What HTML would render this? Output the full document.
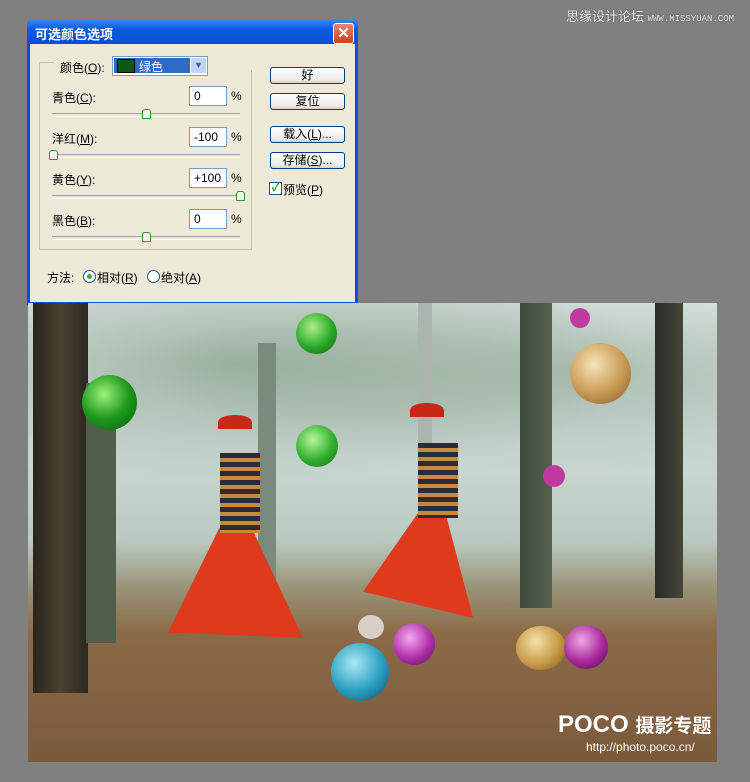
<!DOCTYPE html>
<html><head><meta charset="utf-8"><style>
body{margin:0;width:750px;height:782px;background:#808080;position:relative;overflow:hidden;font-family:"Liberation Sans","Noto Sans CJK SC",sans-serif;font-size:12px;color:#000}
.a{position:absolute}
.inp{position:absolute;left:189px;width:32px;height:18px;background:#fff;border:1px solid #7f9db9;font-size:12px;line-height:18px;padding-left:4px;box-sizing:content-box}
.pct{position:absolute;left:231px}
.sl{position:absolute;left:52px;width:188px;height:2px;border-top:1px solid #a0a0a0;border-bottom:1px solid #fff}
.th{position:absolute;width:7px;height:8px;background:#f4f4f0;border:1px solid #3a8a3a;border-radius:3px 3px 1px 1px}
.btn{position:absolute;left:270px;width:73px;height:15px;border:1px solid #003c74;border-radius:3px;background:linear-gradient(#fff,#ecebe6 80%,#d6d0c5);text-align:center;line-height:15px;font-size:12px}
.ball{position:absolute;border-radius:50%}
.tree{position:absolute}
</style></head><body>
<div class="a" style="left:566px;top:6px;color:#eee;font-size:13px;text-shadow:0 0 1px #333">思缘设计论坛 <span style="font-size:9px;font-family:'Liberation Mono',monospace">WWW.MISSYUAN.COM</span></div>

<div class="a" style="left:27px;top:19px;width:331px;height:286px;background:#0a4fd8;border-radius:6px 6px 0 0"></div>
<div class="a" style="left:27px;top:19px;width:331px;height:25px;background:linear-gradient(#3d8cf5,#0b5ce0 40%,#0650d4);border-radius:6px 6px 0 0"></div>
<div class="a" style="left:35px;top:24px;color:#fff;font-weight:bold;font-size:13px">可选颜色选项</div>
<div class="a" style="left:333px;top:23px;width:19px;height:19px;background:linear-gradient(#e8846a,#c8421e);border:1px solid #fff;border-radius:3px;color:#fff;font-weight:bold;text-align:center;line-height:19px;font-size:15px">✕</div>
<div class="a" style="left:30px;top:44px;width:325px;height:258px;background:#ece9d8"></div>

<div class="a" style="left:39px;top:62px;width:211px;height:186px;border:1px solid #c5c2b2"></div>
<div class="a" style="left:54px;top:56px;width:200px;height:14px;background:#ece9d8"></div>
<div class="a" style="left:60px;top:59px">颜色(<u>O</u>):</div>
<div class="a" style="left:112px;top:56px;width:94px;height:18px;border:1px solid #7f9db9;background:#fff"></div>
<div class="a" style="left:114px;top:58px;width:76px;height:15px;background:#316ac5"></div>
<div class="a" style="left:117px;top:59px;width:16px;height:12px;background:#0b5a12;border:1px solid #000"></div>
<div class="a" style="left:139px;top:58px;color:#fff">绿色</div>
<div class="a" style="left:191px;top:58px;width:15px;height:15px;background:#c1d3fb;border-radius:2px;text-align:center;font-size:9px;line-height:15px;color:#4d6185">▼</div>

<div class="a" style="left:52px;top:89px">青色(<u>C</u>):</div>
<div class="inp" style="top:86px">0</div><div class="pct" style="top:89px">%</div>
<div class="sl" style="top:113px"></div><div class="th" style="left:142px;top:109px"></div>

<div class="a" style="left:52px;top:130px">洋红(<u>M</u>):</div>
<div class="inp" style="top:127px">-100</div><div class="pct" style="top:130px">%</div>
<div class="sl" style="top:154px"></div><div class="th" style="left:49px;top:150px"></div>

<div class="a" style="left:52px;top:171px">黄色(<u>Y</u>):</div>
<div class="inp" style="top:168px">+100</div><div class="pct" style="top:171px">%</div>
<div class="sl" style="top:195px"></div><div class="th" style="left:236px;top:191px"></div>

<div class="a" style="left:52px;top:212px">黑色(<u>B</u>):</div>
<div class="inp" style="top:209px">0</div><div class="pct" style="top:212px">%</div>
<div class="sl" style="top:236px"></div><div class="th" style="left:142px;top:232px"></div>

<div class="btn" style="top:67px">好</div>
<div class="btn" style="top:93px">复位</div>
<div class="btn" style="top:126px">载入(<u>L</u>)...</div>
<div class="btn" style="top:152px">存储(<u>S</u>)...</div>
<div class="a" style="left:269px;top:182px;width:11px;height:11px;border:1px solid #1c5180;background:#fff;color:#21a121;font-size:11px;line-height:11px;text-align:center;font-weight:bold">✓</div>
<div class="a" style="left:283px;top:181px">预览(<u>P</u>)</div>

<div class="a" style="left:47px;top:269px">方法:</div>
<div class="a" style="left:83px;top:270px;width:11px;height:11px;border:1px solid #1c5180;border-radius:50%;background:#fff"></div>
<div class="a" style="left:87px;top:274px;width:5px;height:5px;border-radius:50%;background:#2fb52f"></div>
<div class="a" style="left:97px;top:269px">相对(<u>R</u>)</div>
<div class="a" style="left:147px;top:270px;width:11px;height:11px;border:1px solid #1c5180;border-radius:50%;background:#fff"></div>
<div class="a" style="left:161px;top:269px">绝对(<u>A</u>)</div>

<div class="a" style="left:28px;top:303px;width:689px;height:459px;overflow:hidden;background:linear-gradient(#dfe9e6 0%,#cfdcd8 30%,#b9c8c0 52%,#9a9478 62%,#8b6a48 72%,#7a5a3c 100%)">
 <div class="a" style="left:0;top:0;width:689px;height:200px;background:radial-gradient(ellipse at 30% 30%,rgba(90,120,90,.45),transparent 60%),radial-gradient(ellipse at 80% 35%,rgba(90,120,90,.35),transparent 55%)"></div>
 <div class="tree" style="left:5px;top:0;width:55px;height:390px;background:linear-gradient(90deg,#2a241c,#4a4132,#2c2820)"></div>
 <div class="tree" style="left:58px;top:80px;width:30px;height:260px;background:#4f5f4c"></div>
 <div class="tree" style="left:230px;top:40px;width:18px;height:240px;background:#7a8a7c"></div>
 <div class="tree" style="left:492px;top:0;width:32px;height:305px;background:linear-gradient(90deg,#3d4a3c,#56614f)"></div>
 <div class="tree" style="left:627px;top:0;width:28px;height:295px;background:linear-gradient(90deg,#2a2c26,#454538)"></div>
 <div class="tree" style="left:390px;top:0;width:14px;height:220px;background:#a9b5ad"></div>
 <div class="a" style="left:140px;top:225px;width:135px;height:110px;background:#e03a1e;clip-path:polygon(38% 0,62% 0,100% 100%,0 95%)"></div>
 <div class="a" style="left:192px;top:150px;width:40px;height:80px;background:repeating-linear-gradient(#2a2a3a 0 5px,#c88a3a 5px 9px)"></div>
 <div class="a" style="left:190px;top:112px;width:34px;height:14px;background:#c8281a;border-radius:50% 50% 0 0"></div>
 <div class="a" style="left:335px;top:210px;width:110px;height:105px;background:#e03a1e;clip-path:polygon(50% 0,75% 0,100% 100%,0 75%)"></div>
 <div class="a" style="left:390px;top:140px;width:40px;height:75px;background:repeating-linear-gradient(#2a2a3a 0 5px,#c88a3a 5px 9px)"></div>
 <div class="a" style="left:382px;top:100px;width:34px;height:14px;background:#c8281a;border-radius:50% 50% 0 0"></div>
 <div class="ball" style="left:54px;top:72px;width:55px;height:55px;background:radial-gradient(circle at 40% 35%,#9ef07a,#1e9a1e 50%,#0a5a0a)"></div>
 <div class="ball" style="left:268px;top:10px;width:41px;height:41px;background:radial-gradient(circle at 40% 35%,#aff08a,#29a82a 55%,#0d5d10)"></div>
 <div class="ball" style="left:268px;top:122px;width:42px;height:42px;background:radial-gradient(circle at 40% 35%,#b5f59a,#32b030 55%,#116a14)"></div>
 <div class="ball" style="left:542px;top:40px;width:61px;height:61px;background:radial-gradient(circle at 40% 35%,#f6e4b6,#c99a54 55%,#80562a)"></div>
 <div class="ball" style="left:303px;top:340px;width:58px;height:58px;background:radial-gradient(circle at 40% 35%,#a9e8f4,#2a9ec0 55%,#0e4d66)"></div>
 <div class="ball" style="left:365px;top:320px;width:42px;height:42px;background:radial-gradient(circle at 40% 35%,#f3a8f0,#b030a8 55%,#5a0e58)"></div>
 <div class="ball" style="left:488px;top:323px;width:50px;height:44px;background:radial-gradient(circle at 40% 35%,#f7e0a8,#c79a48 55%,#7a5020)"></div>
 <div class="ball" style="left:536px;top:322px;width:44px;height:44px;background:radial-gradient(circle at 40% 35%,#f0a8e8,#a8289a 55%,#500a4a)"></div>
 <div class="ball" style="left:515px;top:162px;width:22px;height:22px;background:#c03aa0"></div>
 <div class="ball" style="left:542px;top:5px;width:20px;height:20px;background:#c03aa0"></div>
 <div class="ball" style="left:330px;top:312px;width:26px;height:24px;background:#d8d0c8"></div>
 <div class="a" style="left:530px;top:408px;color:#fff;font-weight:bold;font-size:24px">POCO <span style="font-size:19px">摄影专题</span></div>
 <div class="a" style="left:558px;top:437px;color:#fff;font-size:12px">http://photo.poco.cn/</div>
</div>
</body></html>
